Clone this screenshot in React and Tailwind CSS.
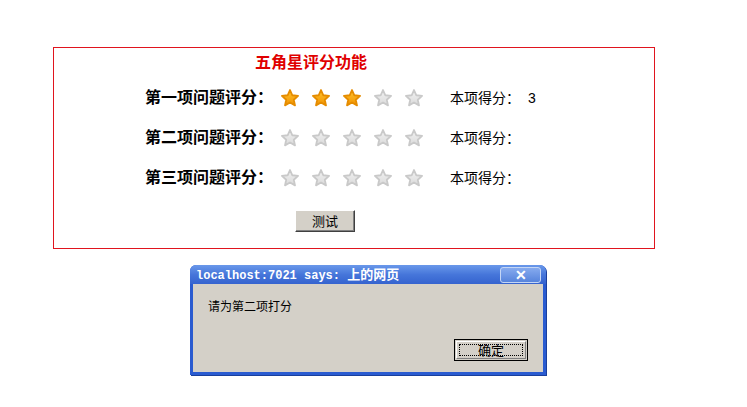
import React, { useState } from 'react';

const STAR_POINTS = "10,2 12.35,7.26 18.08,7.87 13.8,11.74 15,17.38 10,14.5 5,17.38 6.2,11.74 1.92,7.87 7.65,7.26";

const Star = ({ on, id }) => (
    <svg width="20" height="20" viewBox="0 0 20 20">
        <defs>
            <linearGradient id={`g-${id}`} x1="0" y1="0" x2="0" y2="1">
                {on ? (
                    <>
                        <stop offset="0" stopColor="#ffc52e" />
                        <stop offset="1" stopColor="#f29200" />
                    </>
                ) : (
                    <>
                        <stop offset="0" stopColor="#f2f2f2" />
                        <stop offset="1" stopColor="#dadada" />
                    </>
                )}
            </linearGradient>
        </defs>
        <polygon
            points={STAR_POINTS}
            fill={`url(#g-${id})`}
            stroke={on ? '#e58c00' : '#c9c9c9'}
            strokeWidth="1.8"
            strokeLinejoin="round"
        />
    </svg>
);

const questions = ['第一项问题评分：', '第二项问题评分：', '第三项问题评分：'];

const App = () => {
    const [scores] = useState([3, 0, 0]);

    return (
        <div
            className="min-h-screen bg-white text-black"
            style={{ fontFamily: "'Liberation Sans', 'Noto Sans CJK SC', sans-serif" }}
        >
            {/* rating panel */}
            <div className="pt-[47px] pl-[53px]">
                <div className="w-[602px] h-[202px] border border-[#e0141e]">
                    <h1 className="pl-[201px] pt-[5px] text-[16px] leading-[20px] font-bold text-[#e00000]">
                        五角星评分功能
                    </h1>

                    <div className="mt-[5px] pl-[91px]">
                        {questions.map((q, i) => (
                            <div key={q} className="flex items-center h-[40px]">
                                <span className="w-[135px] text-[16px] font-bold">{q}</span>
                                <div className="flex gap-[11px]">
                                    {[1, 2, 3, 4, 5].map(n => (
                                        <Star key={n} id={`${i}-${n}`} on={n <= scores[i]} />
                                    ))}
                                </div>
                                <span className="ml-[26px] text-[14px] flex items-center">
                                    本项得分：
                                    {scores[i] > 0 && <span className="ml-[8px]">{scores[i]}</span>}
                                </span>
                            </div>
                        ))}
                    </div>

                    <button className="mt-[12px] ml-[241px] w-[60px] h-[22px] bg-[#d4d0c8] text-[13px] leading-none border border-t-white border-l-white border-r-[#404040] border-b-[#404040] shadow-[inset_-1px_-1px_0_#808080]">
                        测试
                    </button>
                </div>
            </div>

            {/* alert dialog */}
            <div className="pt-[16px] pl-[190px]">
                <div className="w-[356px] h-[110px] flex flex-col rounded-t-[6px] overflow-hidden bg-[#2a5bd0] shadow-[1px_1px_0_#1a3f9c]">
                    <div className="h-[19px] shrink-0 flex items-center justify-between pl-[6px] pr-[5px] bg-gradient-to-b from-[#6a98ea] via-[#4676da] to-[#3563cf]">
                        <span className="text-white text-[12px] font-bold leading-none whitespace-nowrap">
                            <span style={{ fontFamily: "'Liberation Mono', monospace" }}>localhost:7021 says: </span>
                            <span className="text-[13px]">上的网页</span>
                        </span>
                        <span className="w-[41px] h-[16px] rounded-[3px] border border-[#c4d6f5] bg-gradient-to-b from-[#86aaee] to-[#5784dc] flex items-center justify-center text-white text-[14px] font-bold leading-none">
                            ✕
                        </span>
                    </div>
                    <div className="flex-1 mx-[3px] mb-[3px] bg-[#d4d0c8] flex flex-col">
                        <p className="pl-[15px] pt-[15px] text-[12px] leading-[16px]">请为第二项打分</p>
                        <div className="mt-[24px] pr-[15px] flex justify-end">
                            <button className="w-[74px] h-[22px] bg-[#d4d0c8] border border-black p-[1px]">
                                <span className="block w-full h-full border border-t-white border-l-white border-r-[#808080] border-b-[#808080]">
                                    <span className="flex items-center justify-center h-full outline outline-1 outline-dotted outline-black -outline-offset-[3px] text-[13px] leading-none">
                                        确定
                                    </span>
                                </span>
                            </button>
                        </div>
                    </div>
                </div>
            </div>
        </div>
    );
};

export default App;
